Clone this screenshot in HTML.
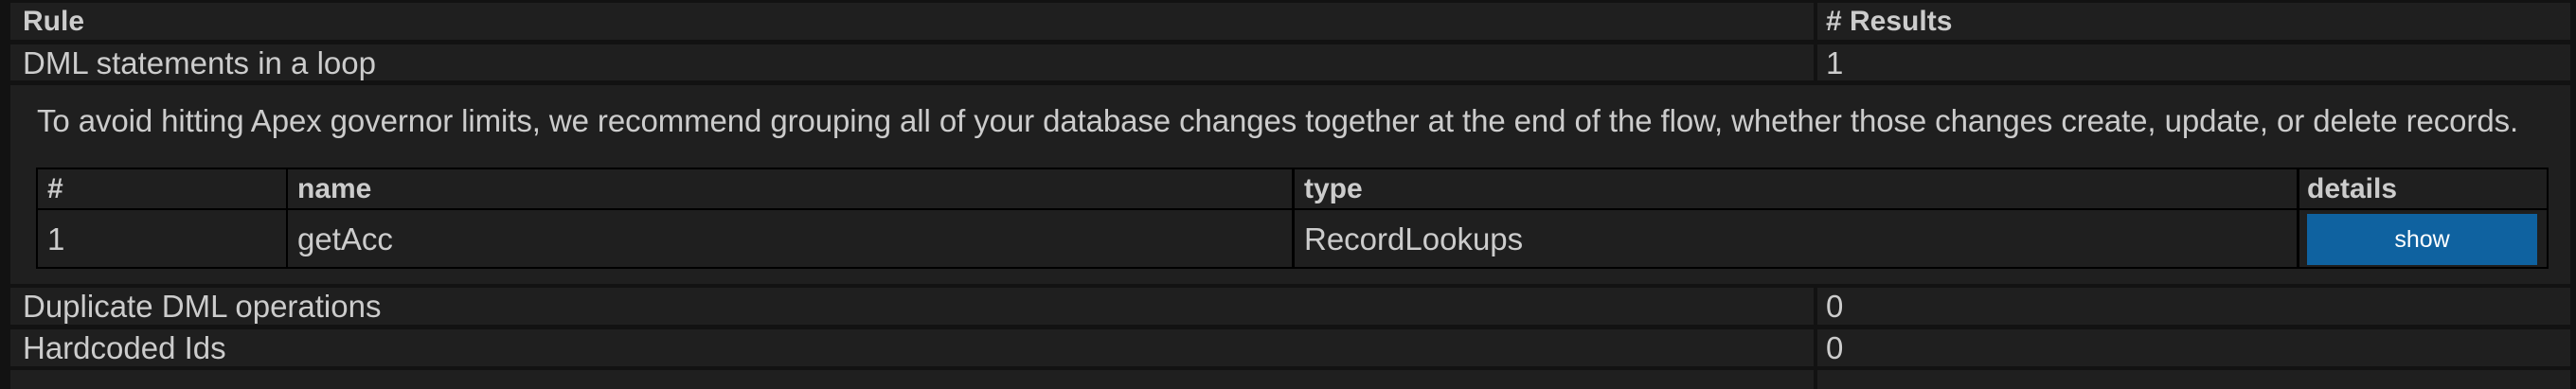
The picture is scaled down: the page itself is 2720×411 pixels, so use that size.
<!DOCTYPE html>
<html><head><style>
body{margin:0;width:2720px;height:400px;background:#121212;overflow:hidden;font-family:"Liberation Sans",sans-serif;color:#cccccc;position:relative}
.c{position:absolute;background:#1f1f1f;box-sizing:border-box;font-size:33px;line-height:1;display:flex;align-items:center;white-space:nowrap}
.b{font-weight:bold;font-size:30px}
</style></head><body>
<!-- header row -->
<div class="c b" style="left:11px;top:3px;width:1904px;height:39px;padding-left:13px">Rule</div>
<div class="c b" style="left:1919px;top:3px;width:795px;height:39px;padding-left:9px">#&nbsp;Results</div>
<!-- row 1 -->
<div class="c" style="left:11px;top:47px;width:1904px;height:38px;padding-left:13px">DML statements in a loop</div>
<div class="c" style="left:1919px;top:47px;width:795px;height:38px;padding-left:9px">1</div>
<!-- detail -->
<div class="c" style="left:11px;top:90px;width:2703px;height:210px;display:block"></div>
<div style="position:absolute;left:39px;top:109px;font-size:33px;white-space:nowrap;letter-spacing:-0.1px">To avoid hitting Apex governor limits, we recommend grouping all of your database changes together at the end of the flow, whether those changes create, update, or delete records.</div>
<div style="position:absolute;left:38px;top:177px;width:2653px;height:107px;background:#000"></div>
<div class="c b" style="left:40px;top:179px;width:262px;height:41px;padding-left:10px">#</div>
<div class="c b" style="left:304px;top:179px;width:1060px;height:41px;padding-left:10px">name</div>
<div class="c b" style="left:1367px;top:179px;width:1058px;height:41px;padding-left:10px">type</div>
<div class="c b" style="left:2428px;top:179px;width:261px;height:41px;padding-left:8px">details</div>
<div class="c" style="left:40px;top:222px;width:262px;height:60px;padding-left:10px">1</div>
<div class="c" style="left:304px;top:222px;width:1060px;height:60px;padding-left:10px">getAcc</div>
<div class="c" style="left:1367px;top:222px;width:1058px;height:60px;padding-left:10px">RecordLookups</div>
<div class="c" style="left:2428px;top:222px;width:261px;height:60px"></div>
<div style="position:absolute;left:2436px;top:226px;width:243px;height:54px;background:#0f62a0;color:#fff;font-size:25px;display:flex;align-items:center;justify-content:center">show</div>
<!-- rows -->
<div class="c" style="left:11px;top:304px;width:1904px;height:39px;padding-left:13px">Duplicate DML operations</div>
<div class="c" style="left:1919px;top:304px;width:795px;height:39px;padding-left:9px">0</div>
<div class="c" style="left:11px;top:348px;width:1904px;height:39px;padding-left:13px">Hardcoded Ids</div>
<div class="c" style="left:1919px;top:348px;width:795px;height:39px;padding-left:9px">0</div>
<div class="c" style="left:11px;top:391px;width:1904px;height:20px"></div>
<div class="c" style="left:1919px;top:391px;width:795px;height:20px"></div>
</body></html>
